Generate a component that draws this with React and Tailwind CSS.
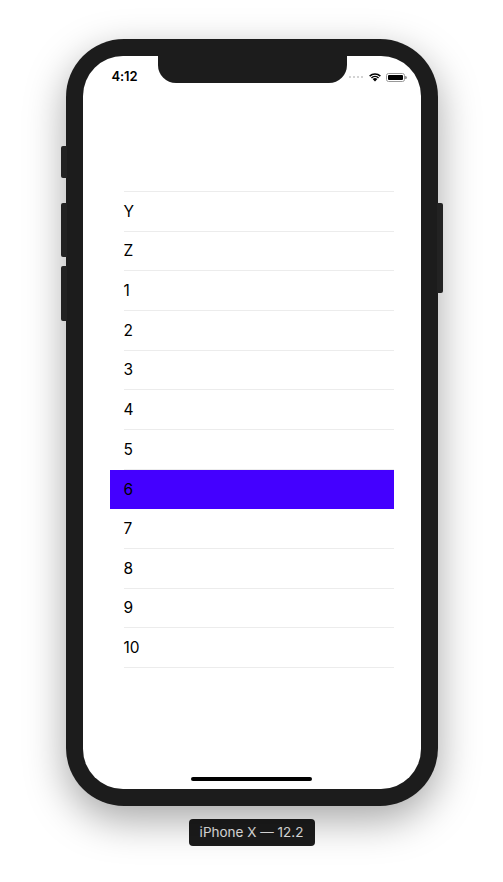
import React from "react";

const rows = ["Y", "Z", "1", "2", "3", "4", "5", "6", "7", "8", "9", "10"];

function Wifi() {
  return (
    <svg width="14" height="10" viewBox="0 0 14 10">
      <path d="M7 9.6 L4.6 7.1 A3.4 3.4 0 0 1 9.4 7.1 Z" fill="#000" />
      <path d="M2.9 5.4 A5.8 5.8 0 0 1 11.1 5.4 L10 6.5 A4.3 4.3 0 0 0 4 6.5 Z" fill="#000" />
      <path d="M1.1 3.6 A8.4 8.4 0 0 1 12.9 3.6 L11.8 4.7 A6.9 6.9 0 0 0 2.2 4.7 Z" fill="#000" />
    </svg>
  );
}

function Battery() {
  return (
    <div className="flex items-center">
      <div className="w-[19px] h-[9px] rounded-[2.5px] border border-[#999] p-[1px]">
        <div className="w-full h-full bg-black rounded-[1px]" />
      </div>
      <div className="w-[1.5px] h-[3px] bg-[#999] rounded-r-sm" />
    </div>
  );
}

export default function App() {
  return (
    <div
      className="w-[503px] h-[882px] bg-white flex flex-col items-center pt-[39px]"
      style={{ fontFamily: "Inter, 'Noto Sans', sans-serif" }}
    >
      <div className="relative w-[372px] h-[767px] rounded-[58px] bg-[#1c1c1c] p-[17px] shadow-[0_14px_40px_rgba(0,0,0,0.35)]">
        {/* side buttons */}
        <div className="absolute left-[-5px] top-[107px] w-[6px] h-[32px] rounded-l-[2px] bg-[#222]" />
        <div className="absolute left-[-5px] top-[164px] w-[6px] h-[54px] rounded-l-[2px] bg-[#222]" />
        <div className="absolute left-[-5px] top-[227px] w-[6px] h-[55px] rounded-l-[2px] bg-[#222]" />
        <div className="absolute right-[-5px] top-[164px] w-[6px] h-[90px] rounded-r-[2px] bg-[#222]" />

        <div className="relative w-full h-full bg-white rounded-[40px] overflow-hidden flex flex-col">
          {/* notch */}
          <div className="absolute left-[75px] top-0 w-[189px] h-[27px] bg-[#1c1c1c] rounded-b-[18px]" />

          <div className="h-[42px] flex items-center justify-between pl-[29px] pr-[14px]">
            <span className="text-[13px] font-semibold text-black tracking-[-0.1px]">4:12</span>
            <div className="flex items-center gap-[4px]">
              <div className="flex gap-[1.5px] mr-[1px]">
                {[0, 1, 2, 3].map((i) => (
                  <div key={i} className="w-[2.5px] h-[2.5px] rounded-full bg-[#c4c4c4]" />
                ))}
              </div>
              <Wifi />
              <Battery />
            </div>
          </div>

          <div className="mt-[93px] mx-[27px] border-t border-[#ececec] ml-[41px]" />
          <div className="mx-[27px]">
            {rows.map((r) => (
              <div
                key={r}
                className={
                  r === "6"
                    ? "h-[39.67px] bg-[#4400ff] pl-[14px] flex items-center"
                    : "h-[39.67px] pl-[14px] flex items-center"
                }
              >
                <div
                  className={
                    r === "6"
                      ? "h-full w-full flex items-center text-[15.5px] text-black"
                      : "h-full w-full flex items-center text-[15.5px] text-black border-b border-[#ececec]"
                  }
                >
                  {r}
                </div>
              </div>
            ))}
          </div>

          <div className="mt-auto mb-[8px] self-center w-[121px] h-[4px] rounded-full bg-black" />
        </div>
      </div>

      <div className="mt-[13px] w-[126px] h-[27px] rounded-[4px] bg-[#1c1c1c] flex items-center justify-center text-[13.5px] text-[#e6e6e6]">
        iPhone X — 12.2
      </div>
    </div>
  );
}
